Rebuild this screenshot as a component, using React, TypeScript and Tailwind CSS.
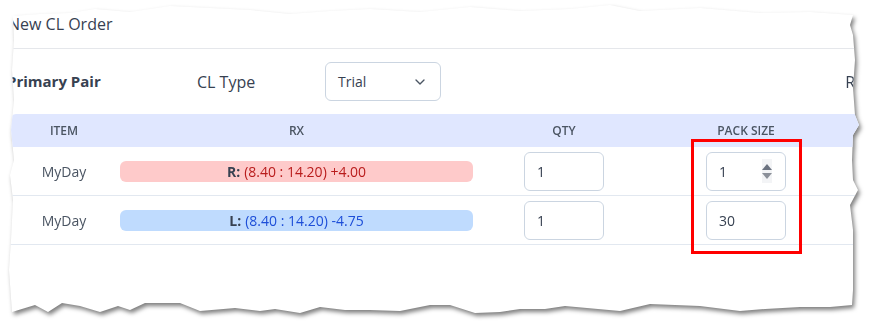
import { ChevronDown } from "lucide-react";

const rows = [
  { side: "R", rx: "(8.40 : 14.20) +4.00", qty: "1", pack: "1", tone: "red" },
  { side: "L", rx: "(8.40 : 14.20) -4.75", qty: "1", pack: "30", tone: "blue" },
];

function NumberInput({ value, spinner }: { value: string; spinner?: boolean }) {
  return (
    <div className="w-[80px] h-[39px] rounded-md border border-[#cbd5e1] bg-white flex items-center pl-[12px] pr-[13px] text-[14px] text-[#374151]">
      <span className="flex-1">{value}</span>
      {spinner && (
        <div className="flex flex-col items-center justify-center gap-[3px] w-[10px] h-[24px] bg-[#f3f4f6]">
          <span className="w-0 h-0 border-x-[5px] border-x-transparent border-b-[6px] border-b-[#6b7280]" />
          <span className="w-0 h-0 border-x-[5px] border-x-transparent border-t-[6px] border-t-[#8b9099]" />
        </div>
      )}
    </div>
  );
}

export default function App() {
  return (
    <div className="relative w-[869px] h-[323px] bg-white overflow-hidden font-['Open_Sans','Liberation_Sans',sans-serif]">
      <div className="[filter:drop-shadow(2px_3px_2px_rgba(0,0,0,0.5))]">
        <div className="w-[869px] h-[323px] bg-white [clip-path:polygon(13px_16px,40px_14px,70px_13px,95px_9px,130px_12px,170px_6px,210px_8px,250px_10px,290px_14px,330px_11px,370px_9px,420px_12px,470px_7px,520px_11px,570px_9px,610px_5px,640px_11px,700px_8px,760px_13px,810px_12px,853px_15px,850px_25px,853px_35px,855px_60px,853px_88px,855px_115px,859px_125px,853px_135px,852px_160px,853px_180px,858px_190px,850px_205px,853px_230px,853px_260px,853px_290px,852px_305px,830px_307px,800px_307px,765px_309px,740px_311px,700px_306px,650px_304px,620px_311px,565px_306px,545px_309px,520px_309px,500px_312px,475px_313px,450px_305px,430px_305px,400px_311px,370px_310px,345px_310px,320px_307px,300px_313px,275px_309px,260px_311px,235px_308px,200px_311px,180px_303px,145px_303px,130px_310px,118px_306px,100px_312px,80px_306px,62px_303px,48px_312px,35px_305px,12px_312px,9px_270px,11px_240px,13px_200px,10px_175px,14px_160px,11px_130px,14px_100px,12px_70px,14px_40px)]">
          {/* title */}
          <div className="h-[49px] pl-[8px] pt-[12px] border-b border-[#e5e7eb] text-[16px] text-[#374151]">
            New CL Order
          </div>

          {/* form row */}
          <div className="h-[65px] flex items-center pl-[7px] text-[16px] text-[#374151]">
            <span className="w-[190px] text-[15px] font-bold">Primary Pair</span>
            <span className="w-[128px]">CL Type</span>
            <div className="w-[116px] h-[39px] rounded-md border border-[#cbd5e1] flex items-center justify-between pl-[12px] pr-[12px] text-[14px]">
              <span>Trial</span>
              <ChevronDown size={16} strokeWidth={2} className="text-[#4b5563]" />
            </div>
            <span className="ml-auto mr-[14px]">R</span>
          </div>

          {/* table */}
          <div className="ml-[10px] w-[850px]">
            <div className="grid grid-cols-[108px_357px_178px_186px_1fr] h-[33px] items-center bg-[#e0e7ff] rounded-tl-md text-[12px] font-semibold text-[#4b5563]">
              <div className="text-center">ITEM</div>
              <div className="text-center">RX</div>
              <div className="text-center">QTY</div>
              <div className="text-center">PACK SIZE</div>
              <div />
            </div>
            {rows.map((r) => (
              <div
                key={r.side}
                className="grid grid-cols-[108px_357px_178px_186px_1fr] h-[49px] items-center border-b border-[#e2e8f0] text-[14px]"
              >
                <div className="text-center text-[#4b5563]">MyDay</div>
                <div className="px-[2px]">
                  <div
                    className={`h-[21px] rounded-md flex items-center justify-center ${
                      r.tone === "red" ? "bg-[#fecaca] text-[#b91c1c]" : "bg-[#bfdbfe] text-[#1d4ed8]"
                    }`}
                  >
                    <span className="font-bold text-[#374151] mr-[4px]">{r.side}:</span>
                    {r.rx}
                  </div>
                </div>
                <div className="flex justify-center">
                  <NumberInput value={r.qty} />
                </div>
                <div className="flex justify-center">
                  <NumberInput value={r.pack} spinner={r.pack === "1"} />
                </div>
                <div />
              </div>
            ))}
          </div>
        </div>
      </div>

      {/* annotation */}
      <div className="absolute left-[691px] top-[139px] w-[111px] h-[115px] border-[3px] border-[#ff0000]" />
    </div>
  );
}
